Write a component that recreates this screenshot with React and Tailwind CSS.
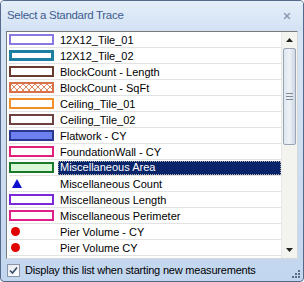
import { X } from "lucide-react";

const traces = [
  { name: "12X12_Tile_01", kind: "box", border: "border-[#8878e0]", fill: "bg-white" },
  { name: "12X12_Tile_02", kind: "box", border: "border-[#1a7fa0] border-[3px]", fill: "bg-white" },
  { name: "BlockCount - Length", kind: "box", border: "border-[#6b3a2e]", fill: "bg-white" },
  { name: "BlockCount - SqFt", kind: "hatch", border: "border-[#d8704a]", fill: "bg-white" },
  { name: "Ceiling_Tile_01", kind: "box", border: "border-[#f0902a]", fill: "bg-white" },
  { name: "Ceiling_Tile_02", kind: "box", border: "border-[#6e4040]", fill: "bg-white" },
  { name: "Flatwork - CY", kind: "box", border: "border-[#283890]", fill: "bg-[#6e7ff0]" },
  { name: "FoundationWall - CY", kind: "box", border: "border-[#e0207a]", fill: "bg-white" },
  { name: "Miscellaneous Area", kind: "box", border: "border-[#1a7a2a]", fill: "bg-[#d8f8d8]", selected: true },
  { name: "Miscellaneous Count", kind: "triangle" },
  { name: "Miscellaneous Length", kind: "box", border: "border-[#7a28d8]", fill: "bg-white" },
  { name: "Miscellaneous Perimeter", kind: "box", border: "border-[#e0208a]", fill: "bg-white" },
  { name: "Pier Volume - CY", kind: "dot" },
  { name: "Pier Volume CY", kind: "dot" },
];

function Swatch({ t }) {
  if (t.kind === "triangle") {
    return (
      <div className="w-[45px] h-[11px] flex items-center">
        <svg width="10" height="9" viewBox="0 0 10 9" className="ml-[3px]">
          <polygon points="5,0 10,9 0,9" fill="#1010d0" />
        </svg>
      </div>
    );
  }
  if (t.kind === "dot") {
    return (
      <div className="w-[45px] h-[11px] flex items-center">
        <div className="ml-[2px] w-[9px] h-[9px] rounded-full bg-[#e00000]" />
      </div>
    );
  }
  if (t.kind === "hatch") {
    return (
      <div className={`w-[45px] h-[11px] border-2 ${t.border} bg-white overflow-hidden`}>
        <svg width="41" height="7" viewBox="0 0 41 7">
          <defs>
            <pattern id="hx" width="6" height="6" patternUnits="userSpaceOnUse">
              <path d="M0 0 L6 6 M6 0 L0 6" stroke="#e08860" strokeWidth="1" />
            </pattern>
          </defs>
          <rect width="41" height="7" fill="url(#hx)" />
        </svg>
      </div>
    );
  }
  return <div className={`w-[45px] h-[11px] border-2 ${t.border} ${t.fill}`} />;
}

export default function App() {
  return (
    <div className="w-[304px] h-[282px] rounded-[4px] border border-[#55698a] bg-gradient-to-b from-[#dbe7f6] via-[#cfdff3] to-[#c2d6ef] flex flex-col font-['Liberation_Sans',sans-serif] overflow-hidden">
      <div className="h-[30px] flex items-center justify-between pl-[6px] pr-[11px] bg-gradient-to-b from-[#e4eef9] to-[#d3e2f4]">
        <span className="text-[11.5px] text-[#3d5d8e] tracking-[-0.3px]">Select a Standard Trace</span>
        <X className="size-[10px] text-[#8a9bb3]" strokeWidth={3.5} />
      </div>
      <div className="mx-[5px] h-[228px] border border-[#7a7a7a] border-r-[#d8d8d8] border-b-[#d8d8d8] bg-white flex">
        <div className="flex-1 flex flex-col pl-[2px]">
          {traces.map((t, i) => (
            <div key={i} className="h-[16px] shrink-0 flex items-center border-b border-[#e2e2e2]">
              <Swatch t={t} />
              <span
                className={
                  t.selected
                    ? "ml-[4px] flex-1 h-[14px] leading-[12px] pl-[2px] bg-[#0a246a] text-white text-[11px] outline-1 outline-dotted outline-[#b0b0b0] -outline-offset-1"
                    : "ml-[4px] pl-[2px] text-[11px] text-black leading-[14px]"
                }
              >
                {t.name}
              </span>
            </div>
          ))}
        </div>
        <div className="w-[16px] flex flex-col bg-[#f3f3f0] border-l border-[#e8e8e8]">
          <div className="h-[16px] flex items-center justify-center">
            <svg width="7" height="4" viewBox="0 0 7 4"><polygon points="3.5,0 7,4 0,4" fill="#222" /></svg>
          </div>
          <div className="mx-[1px] h-[97px] rounded-[2px] border border-[#9aa6b8] bg-gradient-to-r from-[#dfe6ee] via-[#eef2f6] to-[#cdd7e3] flex flex-col items-center justify-center gap-[2px]">
            <div className="w-[7px] h-px bg-[#7d8898]" />
            <div className="w-[7px] h-px bg-[#7d8898]" />
            <div className="w-[7px] h-px bg-[#7d8898]" />
          </div>
          <div className="flex-1" />
          <div className="h-[16px] flex items-center justify-center">
            <svg width="7" height="4" viewBox="0 0 7 4"><polygon points="0,0 7,0 3.5,4" fill="#222" /></svg>
          </div>
        </div>
      </div>
      <div className="flex-1 flex items-center pl-[6px] relative">
        <div className="w-[13px] h-[13px] border border-[#8a96a8] bg-gradient-to-br from-[#e6eaf0] to-white flex items-center justify-center">
          <svg width="9" height="9" viewBox="0 0 9 9">
            <path d="M1 4.5 L3.5 7 L8 1.5" stroke="#3a4a6a" strokeWidth="1.6" fill="none" />
          </svg>
        </div>
        <span className="ml-[5px] text-[11px] text-black tracking-[-0.2px]">Display this list when starting new measurements</span>
        <div className="absolute right-[3px] bottom-[3px] grid grid-cols-3 gap-[1px]">
          {[0, 0, 1, 0, 1, 1, 1, 1, 1].map((v, i) => (
            <div key={i} className={v ? "w-[2px] h-[2px] bg-[#5a6e8a]" : "w-[2px] h-[2px]"} />
          ))}
        </div>
      </div>
    </div>
  );
}
